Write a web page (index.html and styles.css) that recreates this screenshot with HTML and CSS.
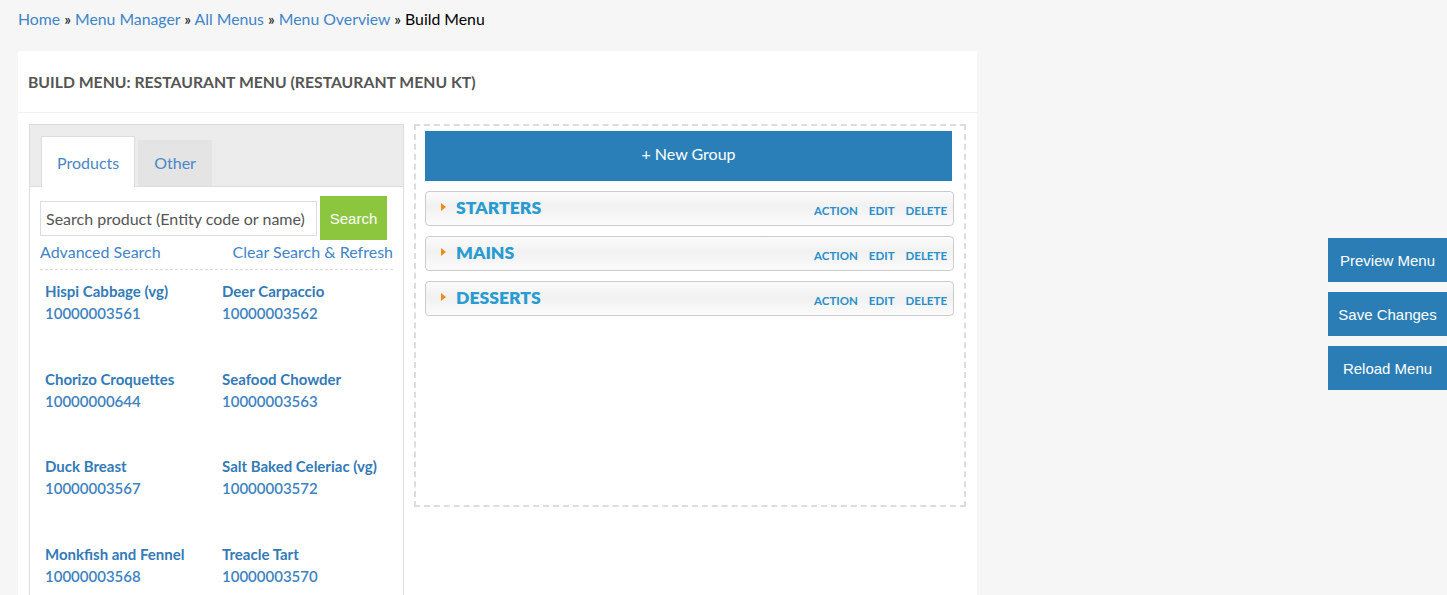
FILE: index.html
```html
<!doctype html>
<html lang="en">
<head>
	<meta charset="UTF-8">
	<title>Build Menu</title>
<link rel="stylesheet" href="styles.css">
</head>
<body>

<div class="page">
	<div class="main">
		<p class="breadcrumb">
			<a href="#">Home</a> &raquo; <a href="#">Menu Manager</a> &raquo; <a href="#">All Menus</a> &raquo; <a href="#">Menu Overview</a> &raquo; Build Menu
		</p>

		<section class="panel">
			<h2 class="panel-head">BUILD MENU: RESTAURANT MENU (RESTAURANT MENU KT)</h2>
			<div class="panel-body">

				<div class="products">
					<div class="tabs">
						<a class="tab active" href="#">Products</a>
						<a class="tab" href="#">Other</a>
					</div>
					<div class="tab-content">
						<div class="search">
							<input type="text" placeholder="Search product (Entity code or name)">
							<button class="btn-search">Search</button>
						</div>
						<div class="search-links">
							<a href="#">Advanced Search</a>
							<a href="#">Clear Search &amp; Refresh</a>
						</div>
						<ul class="product-list">
							<li><b>Hispi Cabbage (vg)</b><span>10000003561</span></li>
							<li><b>Deer Carpaccio</b><span>10000003562</span></li>
							<li><b>Chorizo Croquettes</b><span>10000000644</span></li>
							<li><b>Seafood Chowder</b><span>10000003563</span></li>
							<li><b>Duck Breast</b><span>10000003567</span></li>
							<li><b>Salt Baked Celeriac (vg)</b><span>10000003572</span></li>
							<li><b>Monkfish and Fennel</b><span>10000003568</span></li>
							<li><b>Treacle Tart</b><span>10000003570</span></li>
						</ul>
					</div>
				</div>

				<div class="builder">
					<button class="btn-new">+ New Group</button>
					<div class="group">
						<span class="caret"></span>
						<span class="group-name">STARTERS</span>
						<span class="group-actions"><a href="#">ACTION</a><a href="#">EDIT</a><a href="#">DELETE</a></span>
					</div>
					<div class="group">
						<span class="caret"></span>
						<span class="group-name">MAINS</span>
						<span class="group-actions"><a href="#">ACTION</a><a href="#">EDIT</a><a href="#">DELETE</a></span>
					</div>
					<div class="group">
						<span class="caret"></span>
						<span class="group-name">DESSERTS</span>
						<span class="group-actions"><a href="#">ACTION</a><a href="#">EDIT</a><a href="#">DELETE</a></span>
					</div>
				</div>

			</div>
		</section>
	</div>

	<div class="side">
		<button class="btn-side">Preview Menu</button>
		<button class="btn-side">Save Changes</button>
		<button class="btn-side">Reload Menu</button>
	</div>
</div>

</body>
</html>
```

FILE: styles.css
```css
html, body {
	margin: 0;
	height: 100%;
	overflow: hidden;
}
body {
	background: #f6f6f6;
	font-family: Lato, "Open Sans", sans-serif;
	font-size: 16px;
	color: #000;
}
a {
	color: #3f84c8;
	text-decoration: none;
}
.page {
	display: flex;
	justify-content: space-between;
	padding-left: 18px;
}
.main {
	width: 959px;
}
.breadcrumb {
	margin: 0;
	padding: 10px 0 0;
	height: 51px;
	box-sizing: border-box;
	line-height: 18px;
	font-size: 15.8px;
}

/* panel */
.panel {
	background: #fff;
	height: 560px;
}
.panel-head {
	margin: 0;
	height: 62px;
	line-height: 62px;
	padding-left: 10px;
	font-size: 15.75px;
	font-weight: bold;
	color: #555;
	border-bottom: 1px solid #f1f1f1;
	box-sizing: border-box;
}
.panel-body {
	display: flex;
	gap: 10px;
	padding: 11px 11px 0;
}

/* products */
.products {
	width: 375px;
	border: 1px solid #ddd;
	box-sizing: border-box;
	height: 480px;
}
.tabs {
	display: flex;
	align-items: flex-end;
	gap: 3px;
	background: #ececec;
	padding: 12px 11px 0;
	border-bottom: 1px solid #ddd;
	height: 62px;
	box-sizing: border-box;
}
.tab {
	display: block;
	height: 46px;
	line-height: 46px;
	padding: 0 16px;
	background: #e4e4e4;
	color: #4a86c5;
}
.tab.active {
	height: 50px;
	line-height: 51px;
	margin-bottom: -1px;
	background: #fff;
	border: 1px solid #ddd;
	border-bottom: 0;
	padding: 0 15px;
}
.tab-content {
	padding: 9px 10px 0;
}
.search {
	display: flex;
	align-items: center;
	gap: 3px;
}
.search input {
	width: 277px;
	height: 35px;
	box-sizing: border-box;
	border: 1px solid #ddd;
	padding: 0 5px;
	font-family: Lato, sans-serif;
	font-size: 16px;
	color: #555;
}
.search input::placeholder {
	color: #555;
}
.btn-search {
	width: 67px;
	height: 44px;
	border: 0;
	background: #8cc63f;
	color: #fff;
	font-family: "Liberation Sans", Arial, sans-serif;
	font-size: 15px;
}
.search-links {
	display: flex;
	justify-content: space-between;
	margin-top: 3px;
	line-height: 18px;
	padding-bottom: 8px;
	border-bottom: 1px dashed #ddd;
}
.product-list {
	list-style: none;
	margin: 0;
	padding: 0;
	display: grid;
	grid-template-columns: 177px 177px;
}
.product-list li {
	padding: 10px 5px 0;
	height: 87.5px;
	box-sizing: border-box;
	color: #337ab7;
}
.product-list b {
	display: block;
	font-size: 15px;
	line-height: 22px;
	color: #337ab7;
}
.product-list span {
	display: block;
	font-size: 15px;
	line-height: 23px;
	font-weight: 600;
	color: #4082c0;
}

/* builder */
.builder {
	width: 552px;
	height: 383px;
	box-sizing: border-box;
	border: 2px dashed #ddd;
	padding: 5px 10px 0 9px;
}
.btn-new {
	display: block;
	width: 527px;
	height: 50px;
	border: 0;
	padding: 0 0 6px;
	background: #2b7fb8;
	color: #fff;
	font-family: Lato, sans-serif;
	font-size: 16px;
	margin-bottom: 10px;
}
.group {
	display: flex;
	align-items: center;
	height: 35px;
	box-sizing: border-box;
	width: 529px;
	margin-bottom: 10px;
	border: 1px solid #ccc;
	border-radius: 4px;
	background: linear-gradient(#fbfbfb, #f1f1f1 45%, #fbfbfb);
	padding: 0 6px 0 15px;
}
.caret {
	width: 0;
	height: 0;
	border-top: 4px solid transparent;
	border-bottom: 4px solid transparent;
	border-left: 5px solid #ef8b16;
	margin-right: 10px;
	margin-top: -3px;
}
.group-name {
	font-size: 17.6px;
	font-weight: 800;
	color: #2a9bd1;
	margin-top: -3px;
}
.group-actions {
	margin-left: auto;
	display: flex;
	gap: 11px;
	margin-top: 4px;
}
.group-actions a {
	font-size: 11.5px;
	font-weight: bold;
	color: #2a8fc8;
}

/* side buttons */
.side {
	display: flex;
	flex-direction: column;
	gap: 10px;
	padding-top: 238px;
}
.btn-side {
	width: 119px;
	height: 44px;
	border: 0;
	background: #2b7db6;
	color: #fff;
	font-family: "Liberation Sans", Arial, sans-serif;
	font-size: 15px;
}
```
